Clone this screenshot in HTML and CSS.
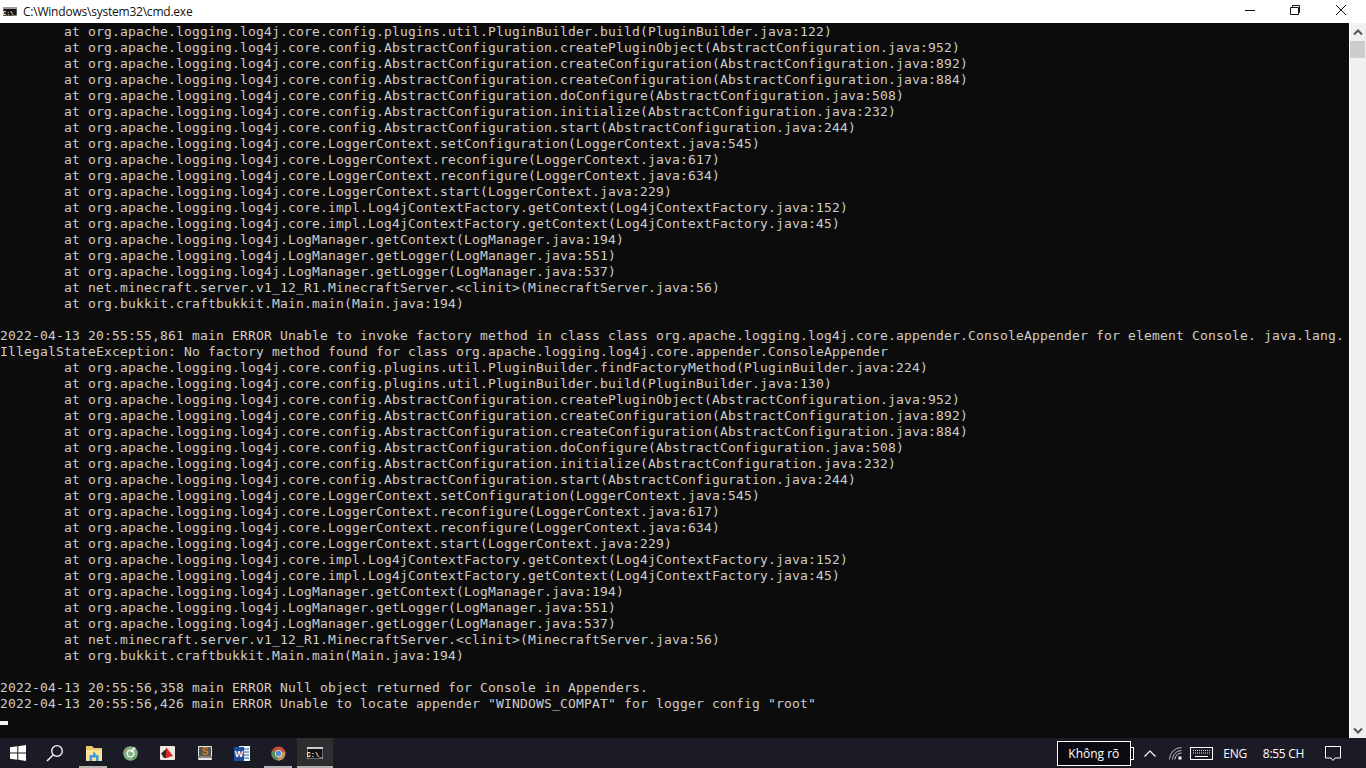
FILE: index.html
```html
<!DOCTYPE html>
<html lang="vi">
<head>
<meta charset="utf-8">
<title>cmd.exe</title>
<link rel="stylesheet" href="styles.css">
</head>
<body>
<div class="window">
  <header class="titlebar">
    <svg class="app-icon" width="14" height="9" viewBox="0 0 14 9"><rect width="14" height="9" fill="#9a9a9a"/><rect x="0.500" y="2" width="13" height="6.500" fill="#111"/><text x="7" y="7.500" class="icon-cmd">C:\_</text></svg>
    <span class="title">C:\Windows\system32\cmd.exe</span>
    <div class="winbtns">
      <svg class="winbtn" width="46" height="23" viewBox="0 0 46 23"><path d="M19 10.500H29" stroke="#111" fill="none"/></svg>
      <svg class="winbtn" width="46" height="23" viewBox="0 0 46 23"><path d="M18.500 7.500H26.500V14.500H18.500Z M20.500 7V5.500H27.500V12.500H27" stroke="#111" fill="none"/></svg>
      <svg class="winbtn" width="46" height="23" viewBox="0 0 46 23"><path d="M18 5L28 15M28 5L18 15" stroke="#111" fill="none"/></svg>
    </div>
  </header>
  <main class="content">
    <pre class="console">        at org.apache.logging.log4j.core.config.plugins.util.PluginBuilder.build(PluginBuilder.java:122)
        at org.apache.logging.log4j.core.config.AbstractConfiguration.createPluginObject(AbstractConfiguration.java:952)
        at org.apache.logging.log4j.core.config.AbstractConfiguration.createConfiguration(AbstractConfiguration.java:892)
        at org.apache.logging.log4j.core.config.AbstractConfiguration.createConfiguration(AbstractConfiguration.java:884)
        at org.apache.logging.log4j.core.config.AbstractConfiguration.doConfigure(AbstractConfiguration.java:508)
        at org.apache.logging.log4j.core.config.AbstractConfiguration.initialize(AbstractConfiguration.java:232)
        at org.apache.logging.log4j.core.config.AbstractConfiguration.start(AbstractConfiguration.java:244)
        at org.apache.logging.log4j.core.LoggerContext.setConfiguration(LoggerContext.java:545)
        at org.apache.logging.log4j.core.LoggerContext.reconfigure(LoggerContext.java:617)
        at org.apache.logging.log4j.core.LoggerContext.reconfigure(LoggerContext.java:634)
        at org.apache.logging.log4j.core.LoggerContext.start(LoggerContext.java:229)
        at org.apache.logging.log4j.core.impl.Log4jContextFactory.getContext(Log4jContextFactory.java:152)
        at org.apache.logging.log4j.core.impl.Log4jContextFactory.getContext(Log4jContextFactory.java:45)
        at org.apache.logging.log4j.LogManager.getContext(LogManager.java:194)
        at org.apache.logging.log4j.LogManager.getLogger(LogManager.java:551)
        at org.apache.logging.log4j.LogManager.getLogger(LogManager.java:537)
        at net.minecraft.server.v1_12_R1.MinecraftServer.&lt;clinit&gt;(MinecraftServer.java:56)
        at org.bukkit.craftbukkit.Main.main(Main.java:194)

2022-04-13 20:55:55,861 main ERROR Unable to invoke factory method in class class org.apache.logging.log4j.core.appender.ConsoleAppender for element Console. java.lang.
IllegalStateException: No factory method found for class org.apache.logging.log4j.core.appender.ConsoleAppender
        at org.apache.logging.log4j.core.config.plugins.util.PluginBuilder.findFactoryMethod(PluginBuilder.java:224)
        at org.apache.logging.log4j.core.config.plugins.util.PluginBuilder.build(PluginBuilder.java:130)
        at org.apache.logging.log4j.core.config.AbstractConfiguration.createPluginObject(AbstractConfiguration.java:952)
        at org.apache.logging.log4j.core.config.AbstractConfiguration.createConfiguration(AbstractConfiguration.java:892)
        at org.apache.logging.log4j.core.config.AbstractConfiguration.createConfiguration(AbstractConfiguration.java:884)
        at org.apache.logging.log4j.core.config.AbstractConfiguration.doConfigure(AbstractConfiguration.java:508)
        at org.apache.logging.log4j.core.config.AbstractConfiguration.initialize(AbstractConfiguration.java:232)
        at org.apache.logging.log4j.core.config.AbstractConfiguration.start(AbstractConfiguration.java:244)
        at org.apache.logging.log4j.core.LoggerContext.setConfiguration(LoggerContext.java:545)
        at org.apache.logging.log4j.core.LoggerContext.reconfigure(LoggerContext.java:617)
        at org.apache.logging.log4j.core.LoggerContext.reconfigure(LoggerContext.java:634)
        at org.apache.logging.log4j.core.LoggerContext.start(LoggerContext.java:229)
        at org.apache.logging.log4j.core.impl.Log4jContextFactory.getContext(Log4jContextFactory.java:152)
        at org.apache.logging.log4j.core.impl.Log4jContextFactory.getContext(Log4jContextFactory.java:45)
        at org.apache.logging.log4j.LogManager.getContext(LogManager.java:194)
        at org.apache.logging.log4j.LogManager.getLogger(LogManager.java:551)
        at org.apache.logging.log4j.LogManager.getLogger(LogManager.java:537)
        at net.minecraft.server.v1_12_R1.MinecraftServer.&lt;clinit&gt;(MinecraftServer.java:56)
        at org.bukkit.craftbukkit.Main.main(Main.java:194)

2022-04-13 20:55:56,358 main ERROR Null object returned for Console in Appenders.
2022-04-13 20:55:56,426 main ERROR Unable to locate appender "WINDOWS_COMPAT" for logger config "root"
<span class="cursor"></span></pre>
    <aside class="scrollbar">
      <svg width="16" height="18" viewBox="0 0 16 18"><path d="M4 11.500L8 7.500L12 11.500" stroke="#555" stroke-width="2" fill="none"/></svg>
      <div class="thumb"></div>
      <div class="track"></div>
      <svg width="16" height="17" viewBox="0 0 16 17"><path d="M4 7.500L8 11.500L12 7.500" stroke="#555" stroke-width="2" fill="none"/></svg>
    </aside>
  </main>
  <footer class="taskbar">
    <div class="tb-left">
      <div class="tb-item tb-start"><svg width="16" height="16" viewBox="0 0 16 16"><path d="M0 2.300L7.300 1.300V7.600H0ZM8.300 1.200L16 0V7.600H8.300ZM0 8.400H7.300V14.700L0 13.700ZM8.300 8.400H16V16L8.300 14.800Z" fill="#fff"/></svg></div>
      <div class="tb-item tb-search"><svg width="18" height="18" viewBox="0 0 18 18"><circle cx="11" cy="7" r="5.300" stroke="#fff" stroke-width="1.300" fill="none"/><path d="M7 11L1 17" stroke="#fff" stroke-width="1.500"/></svg></div>
      <div class="tb-item tb-running"><svg width="16" height="15" viewBox="0 0 16 15"><path d="M0 0H6L8 2H16V15H0Z" fill="#f0c869"/><path d="M0 4H16V15H0Z" fill="#fbe39c"/><path d="M3.500 15V9H7V6.500H9.500V9H12.500V15H10V11.500H6V15Z" fill="#3f9be0"/></svg></div>
      <div class="tb-item"><svg width="15" height="15" viewBox="0 0 15 15"><circle cx="7.500" cy="7.500" r="7.300" fill="#7fb083"/><circle cx="7.500" cy="7.500" r="3.300" fill="none" stroke="#e4efe0" stroke-width="1.500"/><path d="M8 6L12 1.500" stroke="#fff" stroke-width="1.500"/><circle cx="3" cy="5" r="1" fill="#d8736c"/><circle cx="11" cy="12" r="1" fill="#3f7f4a"/></svg></div>
      <div class="tb-item"><svg width="15" height="14" viewBox="0 0 15 14"><rect width="15" height="14" rx="1" fill="#eee9e2"/><path d="M6 1L13 10L6 12Z" fill="#d9291f"/><path d="M1 7.500L6 3V12H4Z" fill="#2c2c2c"/></svg></div>
      <div class="tb-item"><svg width="14" height="14" viewBox="0 0 14 14"><rect width="14" height="14" rx="1" fill="#e8e8e8"/><rect x="1" y="1" width="12" height="9" fill="#55514c"/><text x="7" y="9" class="icon-s">S</text><rect x="0" y="10.500" width="14" height="1" fill="#222"/></svg></div>
      <div class="tb-item"><svg width="16" height="15" viewBox="0 0 16 15"><rect x="5" y="0" width="11" height="15" fill="#f4f7fb"/><path d="M10 3H15M10 6H15M10 9H15M10 12H15" stroke="#2b5fa8"/><rect x="0" y="1" width="10" height="14" fill="#1e4e9c"/><text x="5" y="11" class="icon-w">W</text></svg></div>
      <div class="tb-item tb-running"><svg width="15" height="15" viewBox="0 0 16 16"><circle cx="8" cy="8" r="7.500" fill="#c9503c"/><path d="M8 8L15 6A7.500 7.500 0 0 1 7 15.400Z" fill="#c8965a"/><path d="M8 8L7 15.400A7.500 7.500 0 0 1 1 5Z" fill="#5b8a5e"/><circle cx="8" cy="8" r="3.800" fill="#e8e4e0"/><circle cx="8" cy="8" r="2.900" fill="#4f8fd0"/></svg></div>
      <div class="tb-item tb-active"><svg width="16" height="12" viewBox="0 0 16 12"><rect width="16" height="12" fill="#ccc"/><rect x="0.500" y="2" width="15" height="9.500" fill="#111"/><text x="8" y="9.500" class="icon-cmd icon-cmd-lg">C:\_</text></svg></div>
    </div>
    <div class="tb-right">
      <div class="tooltip-box"><span class="tooltip-text">Không rõ</span><span class="tooltip-nub"></span></div>
      <svg class="tray-chevron" width="12" height="7" viewBox="0 0 12 7"><path d="M0.500 6.500L6 1L11.500 6.500" stroke="#fff" stroke-width="1.200" fill="none"/></svg>
      <svg class="tray-wifi" width="13" height="13" viewBox="0 0 13 13"><path d="M0.500 12.500A12 12 0 0 1 12.500 0.500M3.500 12.500A9 9 0 0 1 12.500 3.500M6 12.500A6.500 6.500 0 0 1 12.500 6" stroke="#bbb" fill="none"/><rect x="9.500" y="9.500" width="3" height="3" fill="#fff"/></svg>
      <svg class="tray-kbd" width="23" height="13" viewBox="0 0 23 13"><rect x="0.500" y="0.500" width="22" height="12" fill="none" stroke="#fff"/><path d="M3 3.500H20M3 6H20" stroke="#ddd" stroke-dasharray="1 1"/><path d="M5 9.500H18" stroke="#fff"/></svg>
      <span class="tray-text tray-lang">ENG</span>
      <span class="tray-text tray-clock">8:55 CH</span>
      <svg class="tray-notify" width="16" height="15" viewBox="0 0 16 15"><path d="M0.500 0.500H15.500V12H10L8 14.500L6 12H0.500Z" stroke="#fff" fill="none"/></svg>
    </div>
  </footer>
</div>
</body>
</html>
```
FILE: styles.css
```css
* { box-sizing: border-box; }
html, body { margin: 0; padding: 0; }
body { width: 1366px; height: 768px; overflow: hidden; background: #0c0c0c; }
.window { display: flex; flex-direction: column; width: 1366px; height: 768px; }

.titlebar { flex: 0 0 23px; display: flex; align-items: center; background: #fff; padding-left: 3px; padding-right: 2px; }
.app-icon { flex: none; margin-right: 6px; }
.title { flex: 1; font: 12px/23px "Open Sans", "Liberation Sans", sans-serif; color: #111; letter-spacing: -0.22px; }
.winbtns { display: flex; }
.winbtn { display: block; }

.content { flex: 1; display: flex; min-height: 0; background: #0c0c0c; }
.console { flex: 0 0 1349px; margin: 0; height: 715px; padding-top: 1px; overflow: hidden; color: #cccccc; background: #0c0c0c;
  font-family: "DejaVu Sans Mono", "Liberation Mono", monospace; font-size: 13px; letter-spacing: 0.174px; line-height: 16px; white-space: pre; }
.cursor { display: inline-block; width: 8px; height: 4px; background: #f2f2f2; vertical-align: -1px; }

.scrollbar { flex: 0 0 17px; display: flex; flex-direction: column; background: #f0f0f0; border-left: 1px solid #fff; }
.scrollbar svg { display: block; flex: none; }
.thumb { flex: 0 0 17px; background: #cdcdcd; margin-right: 1px; }
.track { flex: 1; }

.taskbar { flex: 0 0 30px; display: flex; justify-content: space-between; background: #1b1b26; }
.tb-left { display: flex; }
.tb-item { position: relative; width: 37px; height: 30px; display: flex; align-items: center; justify-content: center; }
.tb-start { width: 36px; }
.tb-search { width: 39px; padding-right: 2px; }
.tb-running::after { content: ""; position: absolute; left: 4px; right: 5px; bottom: 0; height: 2px; background: #b5b3b0; }
.tb-active { width: 36px; background: #2e2e30; }
.tb-active::after { content: ""; position: absolute; left: 0; right: 0; bottom: 0; height: 2px; background: #b5b3b0; }
.icon-w { font: bold 9px "Liberation Sans", sans-serif; fill: #fff; text-anchor: middle; }
.icon-s { font: bold 10px "Liberation Sans", sans-serif; fill: #d9792c; text-anchor: middle; }
.icon-cmd { font: bold 6px "Liberation Mono", monospace; fill: #fff; text-anchor: middle; }
.icon-cmd-lg { font-size: 7px; }

.tb-right { display: flex; align-items: center; }
.tooltip-box { position: relative; width: 74px; height: 25px; margin: 1px 13px 0 0; background: #0a0a10; border: 1px solid #fff; display: flex; align-items: center; padding-left: 10px; }
.tooltip-text { font: 12px "Open Sans", "Liberation Sans", sans-serif; color: #fff; }
.tooltip-nub { position: absolute; right: -4px; top: 5px; width: 3px; height: 13px; border: 1px solid #fff; border-left: 0; background: #0a0a10; }
.tray-chevron { margin-right: 13px; }
.tray-wifi { margin-right: 8px; }
.tray-kbd { margin-right: 10px; }
.tray-text { font: 12px "Open Sans", "Liberation Sans", sans-serif; color: #fff; letter-spacing: -0.3px; }
.tray-lang { margin-right: 16px; }
.tray-clock { margin-right: 21px; }
.tray-notify { margin-right: 25px; }
```
